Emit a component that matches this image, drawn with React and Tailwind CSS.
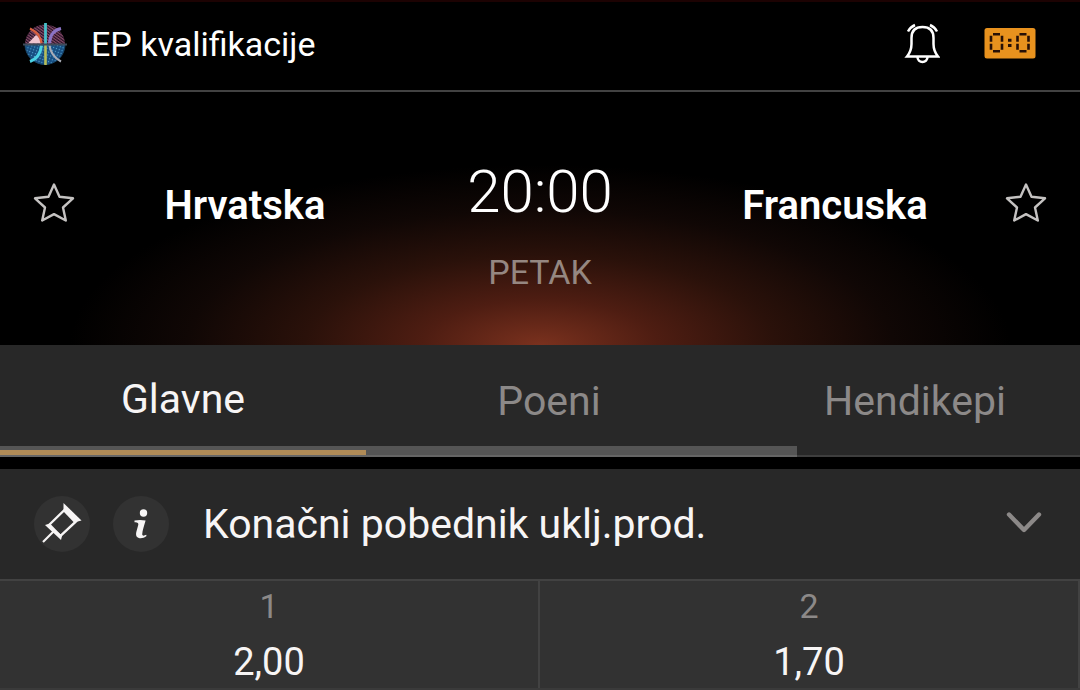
import { useState } from 'react'

const TABS = ['Glavne', 'Poeni', 'Hendikepi']

const ODDS = [
  { label: '1', value: '2,00' },
  { label: '2', value: '1,70' },
]

export default function App() {
  const [activeTab, setActiveTab] = useState('Glavne')

  return (
    <div className="bg-black font-[Roboto,'Noto_Sans',sans-serif] text-white overflow-hidden">
      <Header />
      <MatchInfo />

      {/* tabs */}
      <nav className="relative flex h-28 overflow-hidden bg-[#282828]">
        {TABS.map((tab) => (
          <TabButton key={tab} active={tab === activeTab} onClick={() => setActiveTab(tab)}>
            {tab}
          </TabButton>
        ))}
        {/* scroll thumb, active underline, bottom line */}
        <div className="pointer-events-none absolute bottom-0 left-0 h-[11px] w-[797px] bg-[#555555]" />
        <div className="pointer-events-none absolute bottom-[2px] left-0 h-[5px] w-[366px] bg-[#b08b57]" />
        <div className="pointer-events-none absolute inset-x-0 bottom-0 h-[2px] bg-white/10" />
      </nav>

      <Market />
    </div>
  )
}

function Header() {
  return (
    <header className="flex h-[92px] items-center border-t-2 border-b-2 border-t-[#1c0202] border-b-[#424242] pl-[23px] pr-11 pb-1">
      <LeagueLogo />
      <h1 className="ml-6 text-[34px] leading-10">EP kvalifikacije</h1>
      <button aria-label="Obaveštenja" className="ml-auto">
        <BellIcon />
      </button>
      <button aria-label="Rezultat" className="ml-11">
        <ScoreIcon />
      </button>
    </header>
  )
}

function MatchInfo() {
  return (
    <section className="flex h-[253px] items-start bg-[radial-gradient(ellipse_470px_180px_at_50%_100%,#7a311e_0%,#4e1d12_25%,#2a110a_50%,#100705_75%,#000000_100%)] px-8">
      <StarButton label="Hrvatska u omiljene" />
      <p className="mt-[92px] flex-1 text-center text-[40px] font-semibold leading-11">Hrvatska</p>
      <div className="mt-16 w-63 text-center">
        <p className="text-[60px] font-light leading-18">20:00</p>
        <p className="mt-5 text-[34px] leading-12 text-[#958781]">PETAK</p>
      </div>
      <p className="mt-[92px] flex-1 text-center text-[40px] font-semibold leading-11">Francuska</p>
      <StarButton label="Francuska u omiljene" />
    </section>
  )
}

function StarButton({ label }) {
  return (
    <button aria-label={label} className="mt-[90px] shrink-0">
      <svg width="44" height="42" viewBox="0 0 44 42" fill="none" stroke="#c4c2c1" strokeWidth="2.4" strokeLinejoin="round">
        <path d="M22 2.5 L27.5 14.7 L41 16.3 L31 25.5 L33.8 38.5 L22 32.1 L10.2 38.5 L13 25.5 L3 16.3 L16.5 14.7 Z" />
      </svg>
    </button>
  )
}

function TabButton({ active, onClick, children }) {
  return (
    <button
      onClick={onClick}
      className={`w-[366px] shrink-0 text-[41px] leading-12 ${active ? 'pb-1 text-[#f7f5f5]' : 'text-[#8c8988]'}`}
    >
      {children}
    </button>
  )
}

function Market() {
  return (
    <section className="mt-3 bg-[#282828]">
      <div className="flex h-[110px] items-center pl-[34px] pr-9">
        <button aria-label="Zakači" className="size-14 rounded-full bg-[#323232]">
          <PinIcon />
        </button>
        <button aria-label="Informacije" className="ml-[23px] size-14 rounded-full bg-[#323232]">
          <InfoIcon />
        </button>
        <h2 className="ml-[34px] text-[41px] leading-12 text-[#f7f5f5]">Konačni pobednik uklj.prod.</h2>
        <button aria-label="Prikaži" className="ml-auto">
          <svg width="40" height="28" viewBox="0 0 40 28" fill="none" stroke="#8c8988" strokeWidth="4.4" strokeLinecap="round" strokeLinejoin="round">
            <path d="M5 4.5 L20 20 L35 4.5" />
          </svg>
        </button>
      </div>

      <div className="grid grid-cols-2 border-t-2 border-b-2 border-t-[#424242] border-b-[#3a3a3a] bg-[#323232]">
        {ODDS.map((odd) => (
          <button key={odd.label} className="flex h-[107px] flex-col items-center border-r-2 border-[#424242] pt-[3px]">
            <span className="text-[34px] leading-11 text-[#8c8988]">{odd.label}</span>
            <span className="mt-3 text-[38px] leading-11 text-[#f7f5f5]">{odd.value}</span>
          </button>
        ))}
      </div>
    </section>
  )
}

function LeagueLogo() {
  return (
    <svg width="44" height="44" viewBox="0 0 44 44" fill="none">
      <defs>
        <pattern id="stripes" width="2.4" height="2.4" patternUnits="userSpaceOnUse" patternTransform="rotate(35)">
          <rect width="2.4" height="2.4" fill="#241225" />
          <rect width="2.4" height="1.2" fill="#8a4c6a" />
        </pattern>
        <pattern id="dots" width="3" height="3" patternUnits="userSpaceOnUse" patternTransform="rotate(20)">
          <rect width="3" height="3" fill="#164c80" />
          <circle cx="1.5" cy="1.5" r="0.7" fill="#52a5d0" />
        </pattern>
      </defs>
      <path d="M2 22.5 A20 20 0 0 1 42 22.5 Z" fill="url(#stripes)" />
      <path d="M2 22.5 A20 20 0 0 0 42 22.5 Z" fill="url(#dots)" stroke="#174467" strokeWidth="1" />
      <path d="M5 21.5 L13 13 Q18 16 18 21.5 Z" fill="#efc4cf" />
      <path d="M7 6.5 Q18 12 18.5 21.5" stroke="#d8603f" strokeWidth="2.2" />
      <path d="M38 6.5 Q27 9 26.5 21.5" stroke="#8b74c5" strokeWidth="3" />
      <path d="M18.5 23.5 Q17 36 7 39.5" stroke="#4bd2e4" strokeWidth="3" />
      <path d="M26.5 23.5 Q28 34 38 39.5" stroke="#a9adb7" strokeWidth="2" />
      <path d="M22.5 1 V22" stroke="#48bfc9" strokeWidth="2.8" />
      <path d="M22.5 23 V43" stroke="#b7bd58" strokeWidth="2.6" />
      <path d="M0 22.5 H44" stroke="#3e4b5b" strokeWidth="2" />
    </svg>
  )
}

function BellIcon() {
  return (
    <svg width="36" height="42" viewBox="0 0 36 42" fill="none" stroke="white" strokeWidth="2.5">
      <path d="M3 33.5 Q7.5 28 7.5 21 V15 C7.5 7.5 11.5 4 18.5 4 C25.5 4 29.5 7.5 29.5 15 V21 Q29.5 28 34 33.5 Z" />
      <path d="M13.5 34 A5 5 0 0 0 23.5 34" />
      <path d="M4 8.5 Q6.5 4 11 2 M33 8.5 Q30.5 4 26 2" />
    </svg>
  )
}

// seven-segment zero, without the middle bar
const ZERO = 'M2 0 H9 M2 17 H9 M0 1.5 V7.5 M0 9.5 V15.5 M11 1.5 V7.5 M11 9.5 V15.5'

function ScoreIcon() {
  return (
    <svg width="52" height="32" viewBox="0 0 52 32" fill="none">
      <rect x="0.5" y="0" width="51" height="30.5" rx="2.5" fill="#e8921e" />
      <g stroke="#271006" strokeWidth="2.6">
        <path d={ZERO} transform="translate(7 6.3)" />
        <path d={ZERO} transform="translate(33.5 6.3)" />
        <path d="M24 12.3 H27.5 M24 17.5 H27.5" strokeWidth="3" />
      </g>
    </svg>
  )
}

function PinIcon() {
  return (
    <svg className="size-14" viewBox="0 0 56 56" fill="none" stroke="#f7f5f5">
      <path d="M14.5 29.5 L31 13.5 L42 25.5 L26.5 40 Z" strokeWidth="2.4" />
      <path d="M29.5 7 L47.5 24.5 L40 26.5 L29.5 15.5 Z" fill="#f7f5f5" stroke="none" />
      <path d="M11 29 L16 27.5 L28 40 L27 44 Z" fill="#f7f5f5" stroke="none" />
      <path d="M20 35 L9 46" strokeWidth="2.2" />
    </svg>
  )
}

function InfoIcon() {
  return (
    <svg className="size-14" viewBox="0 0 56 56" fill="#f7f5f5">
      <circle cx="30.5" cy="17" r="3.7" />
      <path d="M21.5 24.5 C25 23.7 29 23.7 32.6 24.5 C31.4 29 29.3 34.8 29.2 38.3 C29.3 40.3 31.5 39.7 33.2 38.8 L33.5 40 C31 42.2 28 42.5 25.8 42 C23 41.2 22.8 38.5 23.3 36 L25.3 28.8 C25.6 26.8 24.5 26 21.5 26.2 Z" />
    </svg>
  )
}
